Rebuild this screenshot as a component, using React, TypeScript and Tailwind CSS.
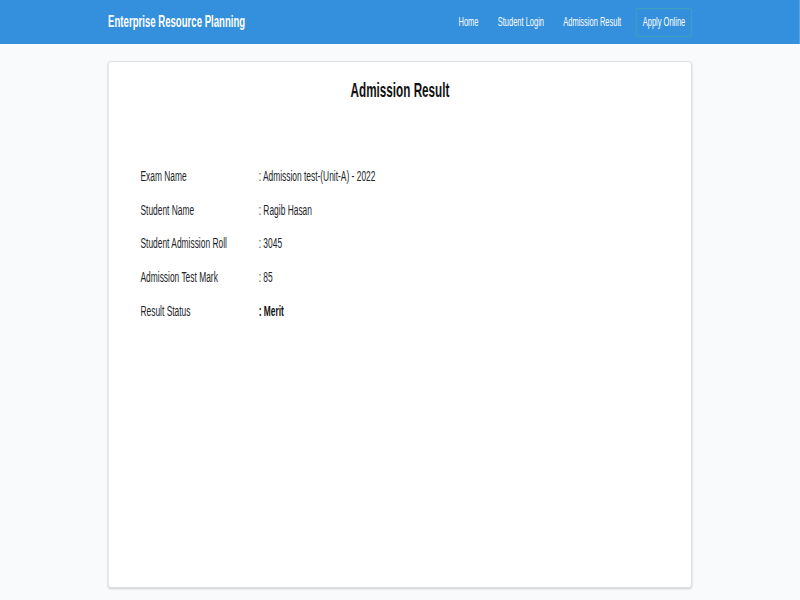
export default function App() {
  const rows: [string, string, boolean?][] = [
    ["Exam Name", ": Admission test-(Unit-A) - 2022"],
    ["Student Name", ": Ragib Hasan"],
    ["Student Admission Roll", ": 3045"],
    ["Admission Test Mark", ": 85"],
    ["Result Status", ": Merit", true],
  ];

  return (
    <div className="w-[800px] h-[600px] overflow-hidden bg-[#f8fafc]">
      {/* the shot is squeezed horizontally, so the page is laid out wide and squashed */}
      <div
        className="w-[1333.33px] h-[600px] origin-top-left scale-x-[0.6] text-[#212529]"
        style={{ fontFamily: '"Liberation Sans", Arial, sans-serif' }}
      >
        <nav className="h-[44px] bg-[#3490dc]">
          <div className="w-[973px] mx-auto h-full flex items-center justify-between">
            <span className="text-white font-bold text-[16px]">Enterprise Resource Planning</span>
            <div className="flex items-center text-white text-[12.5px]">
              <a className="px-4">Home</a>
              <a className="px-4">Student Login</a>
              <a className="px-4">Admission Result</a>
              <a className="ml-[9px] h-[29px] px-[10px] flex items-center border border-[#3fa6b4] rounded-[2px]">
                Apply Online
              </a>
            </div>
          </div>
        </nav>

        <div className="w-[973px] mx-auto pt-[17px]">
          <div className="h-[527px] bg-white border border-[#d9dce0] rounded-[4px] shadow-[0_1px_3px_rgba(0,0,0,0.18)]">
            <h1 className="text-center font-bold text-[19.5px] text-[#111] pt-[14px]">Admission Result</h1>
            <div className="pl-[31px] pt-[61px] flex flex-col gap-[13.75px] text-[14px]">
              {rows.map(([label, value, bold]) => (
                <div key={label} className="flex h-[20px] items-center pl-[22px]">
                  <span className="w-[197px]">{label}</span>
                  <span className={bold ? "font-bold text-[#111]" : ""}>{value}</span>
                </div>
              ))}
            </div>
          </div>
        </div>
      </div>
    </div>
  );
}
